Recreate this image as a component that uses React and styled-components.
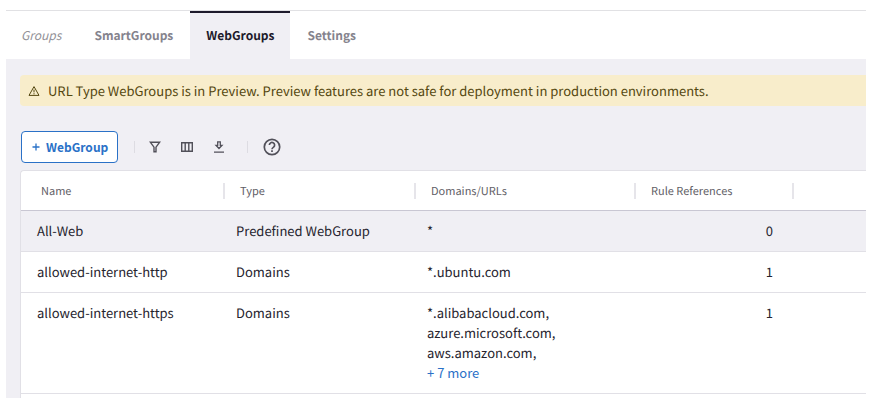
import React from "react";
import styled, { createGlobalStyle } from "styled-components";

const GlobalStyle = createGlobalStyle`
  *, *::before, *::after { box-sizing: border-box; }
  body {
    margin: 0;
    background: #fff;
    color: #25232d;
    font-family: "Noto Sans CJK SC", "Noto Sans", sans-serif;
    font-size: 13px;
    line-height: 20px;
    text-rendering: geometricPrecision;
  }
  button { font: inherit; cursor: pointer; }
`;

const Page = styled.div`
  display: flex;
  flex-direction: column;
  min-height: 100vh;
  padding: 10px 15px 8px 6px;
`;

const Tabs = styled.nav`
  display: flex;
  gap: 1px;
  height: 49px;
  border-top: 1px solid #e1e1e4;
`;

const Tab = styled.a`
  display: flex;
  align-items: center;
  padding: 0 16px;
  border-top: 2px solid ${(p) => (p.$active ? "#1d1a2b" : "transparent")};
  background-color: ${(p) => (p.$active ? "#f0eff4" : "transparent")};
  color: ${(p) => (p.$active ? "#1d1a2b" : "#85838d")};
  font-size: 12px;
  font-weight: 700;
  text-decoration: none;
`;

const LegacyTab = styled(Tab)`
  padding-left: 15px;
  color: #929197;
  font-style: italic;
  font-weight: 400;
`;

const Content = styled.main`
  display: flex;
  flex: 1;
  flex-direction: column;
  padding: 16px 0 0 14px;
  background: #f0eff4;
`;

const Banner = styled.div`
  display: flex;
  align-items: center;
  gap: 8px;
  min-height: 31px;
  padding: 0 8px;
  border-radius: 4px 0 0 4px;
  background: #f8edcb;
  color: #54470f;
`;

const Toolbar = styled.div`
  display: flex;
  align-items: center;
  margin: 25px 0 7px 1px;
`;

const AddButton = styled.button`
  display: flex;
  align-items: center;
  gap: 6px;
  height: 32px;
  padding: 0 9px 0 10px;
  border: 1px solid #2a71c7;
  border-radius: 4px;
  background: #fff;
  color: #2a71c7;
  font-size: 12px;
  font-weight: 700;
`;

const Divider = styled.span`
  width: 1px;
  height: 12px;
  margin: 0 ${(p) => (p.$wide ? 12 : 4)}px 0 ${(p) => (p.$wide ? 12 : 16)}px;
  background: #dddce2;
`;

const IconButton = styled.button`
  display: grid;
  place-items: center;
  width: ${(p) => (p.$large ? 24 : 32)}px;
  height: 32px;
  padding: 0;
  border: 0;
  background: none;
  color: #515059;
`;

const Icon = styled.svg`
  display: block;
  flex: none;
  fill: none;
  stroke: currentColor;
`;

const Card = styled.section`
  flex: 1;
  border: 1px solid #e1e0e6;
  border-width: 1px 0 0 1px;
  border-radius: 4px 0 0 0;
  background: #fff;
  overflow: hidden;
`;

const Table = styled.table`
  width: 100%;
  table-layout: fixed;
  border-collapse: separate;
  border-spacing: 0;
`;

const Column = styled.col`
  width: ${(p) => (p.$width ? `${p.$width}px` : "auto")};
`;

const HeaderCell = styled.th`
  height: 40px;
  padding: 0 0 0 3px;
  border-bottom: 1px solid #c9c7d3;
  color: #5f5e66;
  font-size: 11px;
  font-weight: 400;
  text-align: left;
`;

const HeaderLabel = styled.div`
  display: flex;
  align-items: center;
  gap: 15px;

  &::before {
    content: "";
    width: 2px;
    height: 16px;
    background: ${(p) => (p.$first ? "transparent" : "#e6e5ea")};
  }
`;

const Row = styled.tr`
  background: ${(p) => (p.$highlighted ? "#f0eff4" : "#fff")};
`;

const Cell = styled.td`
  padding: 10px 16px;
  border-bottom: 1px solid #e1e0e6;
  text-align: ${(p) => (p.$numeric ? "right" : "left")};
  vertical-align: top;
`;

const Domain = styled.div`
  white-space: nowrap;
`;

const MoreButton = styled.button`
  display: block;
  padding: 0;
  border: 0;
  background: none;
  color: #2a71c7;
`;

const columns = [
  { label: "Name", width: 199 },
  { label: "Type", width: 191 },
  { label: "Domains/URLs", width: 220 },
  { label: "Rule References", width: 158 },
  { label: "" },
];

const groups = [
  { name: "All-Web", type: "Predefined WebGroup", domains: ["*"], references: 0 },
  { name: "allowed-internet-http", type: "Domains", domains: ["*.ubuntu.com"], references: 1 },
  {
    name: "allowed-internet-https",
    type: "Domains",
    domains: ["*.alibabacloud.com,", "azure.microsoft.com,", "aws.amazon.com,"],
    more: 7,
    references: 1,
  },
];

function WarningIcon() {
  return (
    <Icon width="12" height="12" viewBox="0 0 12 12" aria-hidden="true">
      <path d="M6 1.6 11 10.4H1Z" />
      <path d="M6 4.6V7.4M6 8.2V9.4" />
    </Icon>
  );
}

function PlusIcon() {
  return (
    <Icon width="8" height="8" viewBox="0 0 8 8" aria-hidden="true">
      <path d="M4 .5v7M.5 4h7" strokeWidth="1.3" />
    </Icon>
  );
}

function FilterIcon() {
  return (
    <Icon width="12" height="12" viewBox="0 0 12 12" strokeWidth="1.4" aria-hidden="true">
      <path d="M1.3 1.2h9.4L7 6.2v4.600H5V6.200Z" />
    </Icon>
  );
}

function ColumnsIcon() {
  return (
    <Icon width="12" height="10" viewBox="0 0 12 10" strokeWidth="1.4" aria-hidden="true">
      <path d="M.7.7h10.6v8.6H.7ZM4.2.7v8.6M7.8.7v8.6" />
    </Icon>
  );
}

function DownloadIcon() {
  return (
    <Icon width="12" height="12" viewBox="0 0 12 12" strokeWidth="1.3" aria-hidden="true">
      <path d="M4.700 .8h2.600v3.500h1.700L6 7.500 3 4.300h1.700ZM1 11.200h10" />
    </Icon>
  );
}

function HelpIcon() {
  return (
    <Icon width="18" height="18" viewBox="0 0 18 18" strokeWidth="1.7" aria-hidden="true">
      <circle cx="9" cy="9" r="7.7" />
      <path d="M6.4 7.1a2.6 2.6 0 1 1 4.2 2C9.6 9.800 9 10.200 9 11.300M9 12.300v1.700" />
    </Icon>
  );
}

export default function App() {
  return (
    <>
      <GlobalStyle />
      <Page>
        <Tabs aria-label="Group types">
          <LegacyTab href="#groups">Groups</LegacyTab>
          <Tab href="#smartgroups">SmartGroups</Tab>
          <Tab href="#webgroups" $active aria-current="page">WebGroups</Tab>
          <Tab href="#settings">Settings</Tab>
        </Tabs>
        <Content>
          <Banner role="status">
            <WarningIcon />
            <span>
              URL Type WebGroups is in Preview. Preview features are not safe for deployment in
              production environments.
            </span>
          </Banner>
          <Toolbar>
            <AddButton type="button"><PlusIcon />WebGroup</AddButton>
            <Divider />
            <IconButton type="button" aria-label="Filter"><FilterIcon /></IconButton>
            <IconButton type="button" aria-label="Choose columns"><ColumnsIcon /></IconButton>
            <IconButton type="button" aria-label="Download"><DownloadIcon /></IconButton>
            <Divider $wide />
            <IconButton type="button" $large aria-label="Help"><HelpIcon /></IconButton>
          </Toolbar>
          <Card>
            <Table>
              <colgroup>
                {columns.map((c) => <Column key={c.label} $width={c.width} />)}
              </colgroup>
              <thead>
                <tr>
                  {columns.map((c, i) => (
                    <HeaderCell key={c.label} scope="col">
                      <HeaderLabel $first={i === 0}>{c.label}</HeaderLabel>
                    </HeaderCell>
                  ))}
                </tr>
              </thead>
              <tbody>
                {groups.map((g, i) => (
                  <Row key={g.name} $highlighted={i === 0}>
                    <Cell>{g.name}</Cell>
                    <Cell>{g.type}</Cell>
                    <Cell>
                      {g.domains.map((d) => <Domain key={d}>{d}</Domain>)}
                      {g.more && <MoreButton type="button">+ {g.more} more</MoreButton>}
                    </Cell>
                    <Cell $numeric>{g.references}</Cell>
                    <Cell />
                  </Row>
                ))}
              </tbody>
            </Table>
          </Card>
        </Content>
      </Page>
    </>
  );
}
